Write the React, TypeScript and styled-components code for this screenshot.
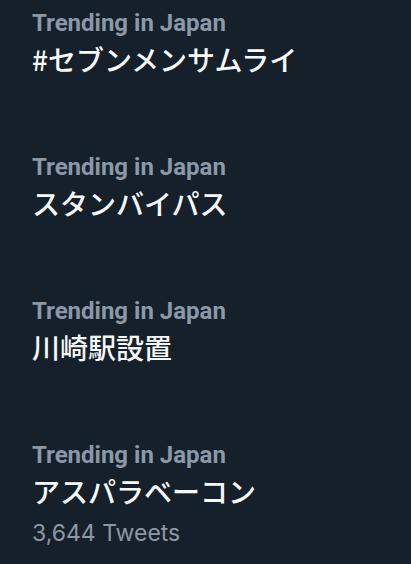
import React from "react";
import styled, { createGlobalStyle } from "styled-components";

const Global = createGlobalStyle`
  html, body { margin: 0; padding: 0; background: #15202b; }
  body { font-family: Inter, "Noto Sans CJK JP", sans-serif; }
`;

const List = styled.div`
  display: flex;
  flex-direction: column;
  background: #15202b;
  min-height: 564px;
`;

const Row = styled.div`
  display: flex;
  flex-direction: column;
  box-sizing: border-box;
  padding: 8px 32px 0;
  min-height: 144px;
`;

const Label = styled.div`
  font-family: Roboto, "Noto Sans CJK JP", sans-serif;
  font-weight: 700;
  font-size: 24px;
  line-height: 30px;
  color: #8b98a5;
`;

const Title = styled.div`
  font-family: "Noto Sans CJK JP", sans-serif;
  font-weight: 500;
  font-size: 28px;
  line-height: 42px;
  color: #f7f9f9;
`;

const Count = styled.div`
  font-family: Inter, "Noto Sans CJK JP", sans-serif;
  font-weight: 400;
  font-size: 23px;
  line-height: 30px;
  color: #8b98a5;
  margin-top: 6px;
`;

const trends = [
  { title: "#セブンメンサムライ" },
  { title: "スタンバイパス" },
  { title: "川崎駅設置" },
  { title: "アスパラベーコン", count: "3,644 Tweets" },
];

export default function App() {
  return (
    <>
      <Global />
      <List>
        {trends.map((t) => (
          <Row key={t.title}>
            <Label>Trending in Japan</Label>
            <Title>{t.title}</Title>
            {t.count && <Count>{t.count}</Count>}
          </Row>
        ))}
      </List>
    </>
  );
}
